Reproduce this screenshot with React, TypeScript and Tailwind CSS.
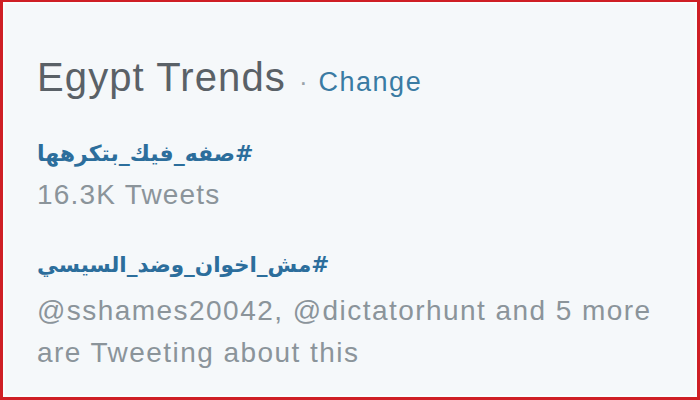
export default function App() {
  const trends = [
    { tag: "#صفه_فيك_بتكرهها", meta: "16.3K Tweets" },
  ];
  return (
    <div className="h-[400px] w-[700px] overflow-hidden border-t-2 border-r-[3px] border-b-[3px] border-l-[3px] border-[#cf1f25] bg-[#f5f8fa] font-['Liberation_Sans',Arial,sans-serif]">
      <div className="h-full w-full border-2 border-[#fbfdfe] pl-[32px] pt-[53px]">
        <div className="flex items-baseline leading-[40px] whitespace-nowrap">
          <span className="text-[40px] tracking-[1.1px] text-[#5a6167]">Egypt Trends</span>
          <span className="ml-[13px] text-[26px] text-[#9aa3a9]">·</span>
          <span className="ml-[11px] text-[27px] tracking-[1.5px] text-[#3a7ba3]">Change</span>
        </div>

        {trends.map((t) => (
          <div key={t.tag} className="mt-[37px]">
            <div className="leading-[30px]">
              <span dir="rtl" className="inline-block font-['DejaVu_Sans',sans-serif] text-[22px] font-bold text-[#2c6e9c]">
                {t.tag}
              </span>
            </div>
            <div className="mt-[9px] text-[28px] leading-[30px] tracking-[1.2px] text-[#8b949a]">{t.meta}</div>
          </div>
        ))}

        <div className="mt-[40px] leading-[30px]">
          <span dir="rtl" className="inline-block font-['DejaVu_Sans',sans-serif] text-[21.5px] font-bold text-[#2c6e9c]">
            #مش_اخوان_وضد_السيسي
          </span>
        </div>
        <p className="mt-[8px] w-[640px] text-[28px] leading-[42px] tracking-[1.45px] text-[#8b949a]">
          @sshames20042, @dictatorhunt and 5 more are Tweeting about this
        </p>
      </div>
    </div>
  );
}
